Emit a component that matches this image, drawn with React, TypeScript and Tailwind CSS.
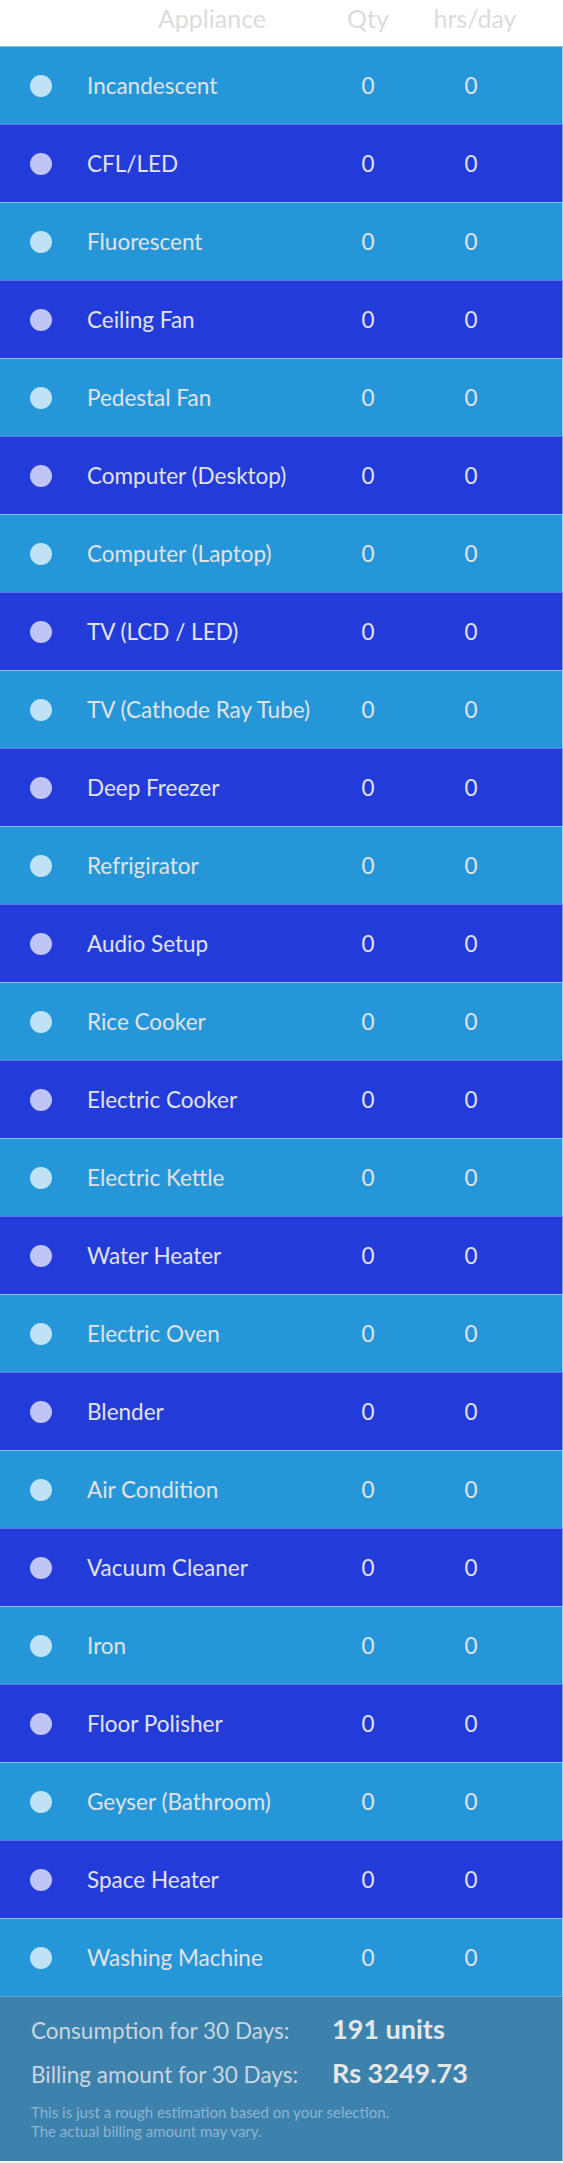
import React from "react";

const appliances = [
  "Incandescent",
  "CFL/LED",
  "Fluorescent",
  "Ceiling Fan",
  "Pedestal Fan",
  "Computer (Desktop)",
  "Computer (Laptop)",
  "TV (LCD / LED)",
  "TV (Cathode Ray Tube)",
  "Deep Freezer",
  "Refrigirator",
  "Audio Setup",
  "Rice Cooker",
  "Electric Cooker",
  "Electric Kettle",
  "Water Heater",
  "Electric Oven",
  "Blender",
  "Air Condition",
  "Vacuum Cleaner",
  "Iron",
  "Floor Polisher",
  "Geyser (Bathroom)",
  "Space Heater",
  "Washing Machine",
];

export default function App() {
  return (
    <div className="w-[563px] bg-white" style={{ fontFamily: "Lato, 'Open Sans', sans-serif" }}>
      <div className="flex h-[46px] pt-[3px] text-[25px] leading-[30px] text-[#dcdcdc]">
        <div className="w-[88px]" />
        <div className="w-[248px] text-center">Appliance</div>
        <div className="w-[64px] text-center">Qty</div>
        <div className="w-[150px] text-center">hrs/day</div>
      </div>
      {appliances.map((name, i) => {
        const dark = i % 2 === 1;
        return (
          <div
            key={name}
            className={
              "flex h-[78px] items-center border-t border-r text-[22.5px] text-[#e2e2e2] " +
              (dark
                ? "bg-[#233cd9] border-t-[#5a78e4] border-r-[#8a9ce8]"
                : "bg-[#2597d9] border-t-[#86c3ec] border-r-[#9ccff0]")
            }
          >
            <div className="flex w-[87px] pl-[30px]">
              <div
                className={
                  "h-[22px] w-[22px] rounded-full " +
                  (dark ? "bg-[#c0c6f3]" : "bg-[#bfe2f4]")
                }
              />
            </div>
            <div className="w-[249px]">{name}</div>
            <div className="w-[64px] text-center">0</div>
            <div className="w-[142px] text-center">0</div>
          </div>
        );
      })}
      <div className="border-t border-r border-t-[#6aa8d4] border-r-[#8dbad6] bg-[#3c82ad] pt-[10px] pb-[20px] pl-[31px]">
        <div className="flex h-[44px] items-baseline leading-[44px]">
          <div className="w-[301px] text-[22.5px] text-[#c9d6e0]">Consumption for 30 Days:</div>
          <div className="text-[27px] font-bold text-[#e6e6e6]">191 units</div>
        </div>
        <div className="flex h-[44px] items-baseline leading-[44px]">
          <div className="w-[301px] text-[22.5px] text-[#c9d6e0]">Billing amount for 30 Days:</div>
          <div className="text-[27px] font-bold text-[#e6e6e6]">Rs 3249.73</div>
        </div>
        <div className="mt-[8px] text-[15px] leading-[19px] text-[#8fb4cf]">
          This is just a rough estimation based on your selection.
          <br />
          The actual billing amount may vary.
        </div>
      </div>
    </div>
  );
}
